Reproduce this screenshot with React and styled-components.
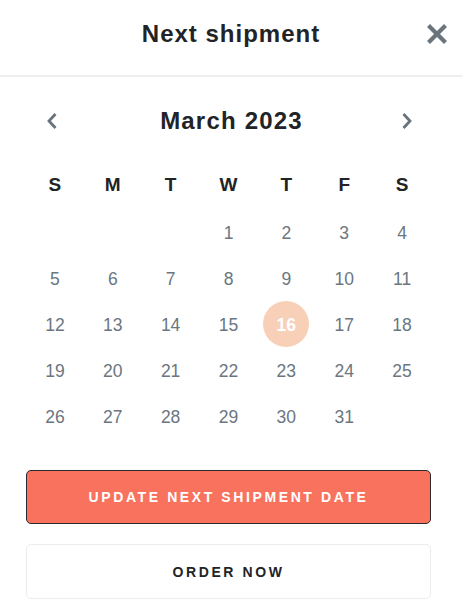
import React from "react";
import styled, { createGlobalStyle } from "styled-components";

const Global = createGlobalStyle`
  html, body { margin: 0; padding: 0; background: #fff; }
  body { font-family: "Liberation Sans", Arial, sans-serif; }
  * { box-sizing: border-box; }
`;

const Panel = styled.div`
  width: 462px;
  height: 615px;
  background: #fff;
  display: flex;
  flex-direction: column;
`;

const Header = styled.header`
  height: 77px;
  border-bottom: 2px solid #eeeeee;
  display: flex;
  align-items: center;
  justify-content: center;
  position: relative;
  padding-bottom: 7px;
`;

const Title = styled.h1`
  margin: 0;
  font-size: 24px;
  font-weight: 700;
  color: #222326;
  letter-spacing: 1px;
`;

const CloseBtn = styled.button`
  position: absolute;
  right: 13px;
  top: 22px;
  width: 24px;
  height: 24px;
  border: 0;
  background: none;
  padding: 0;
  display: flex;
  align-items: center;
  justify-content: center;
  cursor: pointer;
`;

const Body = styled.div`
  padding: 0 31px 0 26px;
  display: flex;
  flex-direction: column;
`;

const MonthRow = styled.div`
  height: 44px;
  margin-top: 22px;
  display: flex;
  align-items: center;
  justify-content: space-between;
  padding: 0 16px 0 18px;
`;

const MonthTitle = styled.h2`
  margin: 0;
  font-size: 24px;
  font-weight: 700;
  color: #222326;
  letter-spacing: 1.2px;
  margin-left: 4px;
`;

const NavBtn = styled.button`
  border: 0;
  background: none;
  padding: 0;
  width: 16px;
  height: 20px;
  display: flex;
  align-items: center;
  justify-content: center;
`;

const Grid = styled.div`
  display: grid;
  grid-template-columns: repeat(7, 1fr);
  margin-top: 17px;
`;

const WeekDay = styled.div`
  height: 50px;
  display: flex;
  align-items: center;
  justify-content: center;
  font-size: 19px;
  font-weight: 700;
  color: #222326;
`;

const Day = styled.div`
  height: 46px;
  display: flex;
  align-items: center;
  justify-content: center;
  font-size: 17.5px;
  color: ${(p) => (p.$selected ? "#fff" : "#6b7680")};
  font-weight: ${(p) => (p.$selected ? 700 : 400)};
  position: relative;
  z-index: 0;
  &::before {
    content: "";
    display: ${(p) => (p.$selected ? "block" : "none")};
    position: absolute;
    width: 46px;
    height: 46px;
    border-radius: 50%;
    background: #f8d0b8;
    z-index: -1;
    top: -1px;
  }
`;

const Actions = styled.div`
  display: flex;
  flex-direction: column;
  gap: 20px;
  margin-top: 30px;
`;

const Button = styled.button`
  height: ${(p) => (p.$primary ? "54px" : "55px")};
  width: 100%;
  border-radius: 5px;
  border: 1px solid ${(p) => (p.$primary ? "#2a2a2e" : "#ececec")};
  background: ${(p) => (p.$primary ? "#f9725e" : "#fff")};
  color: ${(p) => (p.$primary ? "#fff" : "#222326")};
  font-family: "Liberation Sans", Arial, sans-serif;
  font-weight: 700;
  font-size: 14px;
  letter-spacing: 2.6px;
  text-transform: uppercase;
  cursor: pointer;
`;

const days = [];
for (let i = 0; i < 3; i++) days.push(null);
for (let d = 1; d <= 31; d++) days.push(d);

export default function App() {
  return (
    <Panel>
      <Global />
      <Header>
        <Title>Next shipment</Title>
        <CloseBtn aria-label="Close">
          <svg width="20" height="20" viewBox="0 0 20 20">
            <path d="M3 3 L17 17 M17 3 L3 17" stroke="#69747d" strokeWidth="4.2" strokeLinecap="square" />
          </svg>
        </CloseBtn>
      </Header>
      <Body>
        <MonthRow>
          <NavBtn aria-label="Previous month">
            <svg width="12" height="18" viewBox="0 0 12 18">
              <path d="M9.5 2 L3 9 L9.5 16" fill="none" stroke="#69747d" strokeWidth="2.8" />
            </svg>
          </NavBtn>
          <MonthTitle>March 2023</MonthTitle>
          <NavBtn aria-label="Next month">
            <svg width="12" height="18" viewBox="0 0 12 18">
              <path d="M2.5 2 L9 9 L2.5 16" fill="none" stroke="#69747d" strokeWidth="2.8" />
            </svg>
          </NavBtn>
        </MonthRow>
        <Grid>
          {["S", "M", "T", "W", "T", "F", "S"].map((w, i) => (
            <WeekDay key={i}>{w}</WeekDay>
          ))}
          {days.map((d, i) => (
            <Day key={i} $selected={d === 16}>{d}</Day>
          ))}
        </Grid>
        <Actions>
          <Button $primary>Update next shipment date</Button>
          <Button>Order now</Button>
        </Actions>
      </Body>
    </Panel>
  );
}
